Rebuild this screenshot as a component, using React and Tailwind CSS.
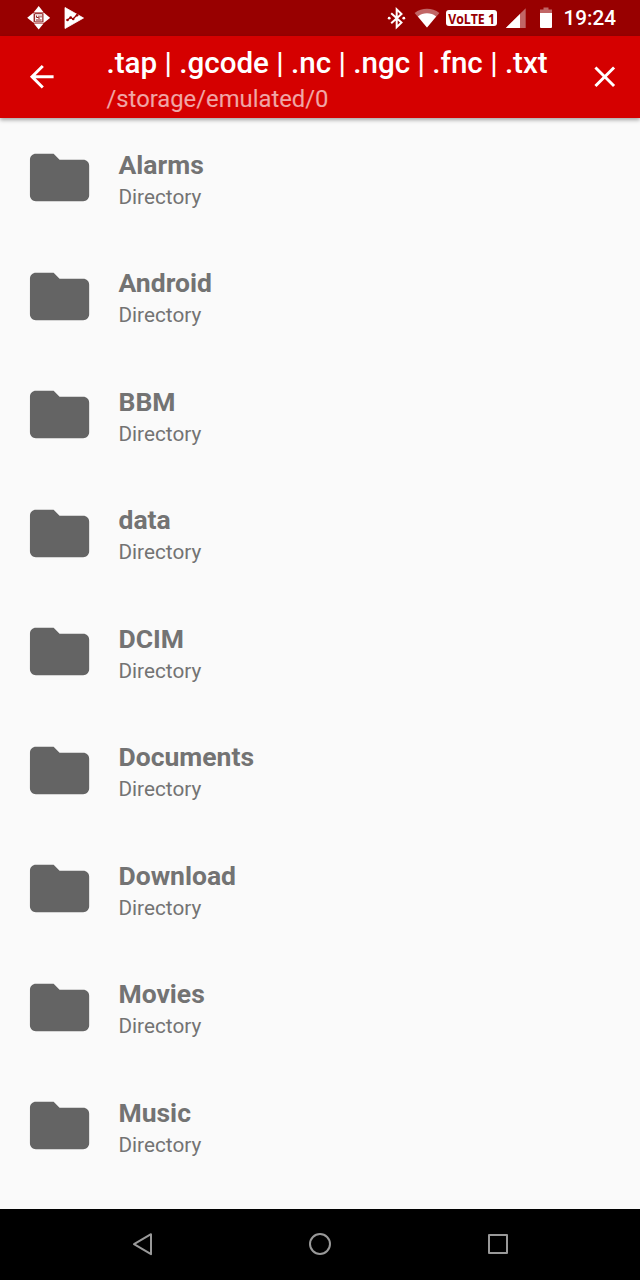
const folders = [
  'Alarms',
  'Android',
  'BBM',
  'data',
  'DCIM',
  'Documents',
  'Download',
  'Movies',
  'Music',
];

const StatusBar = () => (
  <div className="flex h-9 items-center bg-[#980000] pl-[26px] text-white">
    <svg className="h-6 w-6" viewBox="0 0 24 24" fill="currentColor">
      <path d="M7.8 6.2L12.7 0l4.9 6.2zM7.8 17.4l4.9 6 4.9-6zM7.4 6.8L1.2 11.8l6.2 5zM18 6.8l6.2 5-6.2 5z" />
      <path d="M7.6 6.7h10.2v10.2H7.6z" />
      <path d="M8.6 7.7h8.2v8.2H8.6z" fill="none" stroke="#8a1414" strokeWidth="1" />
      <path d="M10.6 9.5v2h2M13 9.5v3.5M15 9.5v2M10 14h5.6" fill="none" stroke="#8a1414" strokeWidth="1" />
    </svg>
    <svg className="ml-3 h-6 w-6" viewBox="0 0 24 24">
      <path d="M3 1.5L21.5 12 3 22.5z" fill="#fff" stroke="#fff" strokeWidth=".8" strokeLinejoin="round" />
      <path d="M5.5 14l3-2.5 2.5 1.5 4-4" fill="none" stroke="#980000" strokeWidth="1.3" />
      <g fill="#980000">
        <circle cx="5.5" cy="14" r="1.3" />
        <circle cx="8.7" cy="11.6" r="1.3" />
        <circle cx="11.2" cy="13" r="1.3" />
        <circle cx="15" cy="9.3" r="1.3" />
      </g>
    </svg>

    <svg className="ml-[299px] h-6 w-6" viewBox="0 0 24 24">
      <path d="M6.2 7.2l10.3 9.3-4.8 4.7V3.300l4.800 4.700L6.200 17.300" fill="none" stroke="#fff" strokeWidth="2" />
      <circle cx="4.2" cy="12.2" r="1.4" fill="#fff" />
      <circle cx="18.8" cy="12.2" r="1.4" fill="#fff" />
    </svg>
    <svg className="ml-[5px] h-6 w-[26px]" viewBox="0 0 26 24">
      <path d="M.6 7C8 1.4 18 1.4 25.4 7L13 21.5z" fill="#fff" fillOpacity=".4" />
      <path d="M3.9 10.6c5-4.4 13.2-4.4 18.2 0L13 21.5z" fill="#fff" />
    </svg>
    <div className="ml-[6px] flex h-4 w-[51px] items-center justify-center rounded-[3px] bg-white font-['Open_Sans',sans-serif] text-[15px] font-bold leading-none whitespace-nowrap text-[#980000]">
      <span className="scale-x-[0.82]">VoLTE 1</span>
    </div>
    <svg className="ml-2 h-6 w-6" viewBox="0 0 24 24">
      <path d="M20.7 2.2V22H.8z" fill="#fff" fillOpacity=".4" />
      <path d="M15 7.9V22H.8z" fill="#fff" />
    </svg>
    <svg className="ml-[9px] h-6 w-4" viewBox="0 0 16 24">
      <path d="M5.5 1.5h5v2H14V7H2V3.5h3.500z" fill="#fff" fillOpacity=".4" />
      <path d="M2 7h12v14a1 1 0 0 1-1 1H3a1 1 0 0 1-1-1z" fill="#fff" />
    </svg>
    <span className="ml-[9.5px] text-[20.7px] font-medium leading-none">19:24</span>
  </div>
);

const Toolbar = () => (
  <header className="z-10 flex h-[82px] items-center bg-[#d50000] pl-[23.7px] pr-[18px] text-white shadow-[0_2px_4px_rgba(0,0,0,0.35)]">
    <svg className="h-[35.5px] w-[35.5px]" viewBox="0 0 24 24" fill="currentColor">
      <path d="M20 11H7.83l5.59-5.59L12 4l-8 8 8 8 1.41-1.41L7.83 13H20v-2z" />
    </svg>
    <div className="ml-[47.3px] flex-1 whitespace-nowrap">
      <h1 className="mt-[5px] text-[29.6px] font-medium leading-9">.tap | .gcode | .nc | .ngc | .fnc | .txt</h1>
      <p className="mt-0.5 text-[23.8px] leading-8 text-white/65">/storage/emulated/0</p>
    </div>
    <svg className="h-[35.5px] w-[35.5px]" viewBox="0 0 24 24" fill="currentColor">
      <path d="M19 6.41L17.59 5 12 10.59 6.41 5 5 6.41 10.59 12 5 17.59 6.41 19 12 13.41 17.59 19 19 17.59 13.41 12z" />
    </svg>
  </header>
);

const FolderRow = ({ name }) => (
  <li className="flex h-[118.52px] shrink-0 items-center pl-[23.7px]">
    <svg className="h-[71.1px] w-[71.1px]" viewBox="0 0 24 24" fill="#646464">
      <path d="M10 4H4c-1.1 0-1.99.9-1.99 2L2 18c0 1.1.9 2 2 2h16c1.1 0 2-.9 2-2V8c0-1.1-.9-2-2-2h-8l-2-2z" />
    </svg>
    <div className="mb-[-3px] ml-[23.7px] text-[#737373]">
      <p className="text-[26.5px] font-bold leading-[34px]">{name}</p>
      <p className="mt-px text-[20.74px] leading-7">Directory</p>
    </div>
  </li>
);

const NavBar = () => (
  <nav className="flex h-[71px] items-center justify-between bg-black px-[124px] pb-px">
    <svg className="h-9 w-9" viewBox="0 0 36 36" fill="none" stroke="#999" strokeWidth="2" strokeLinejoin="round">
      <path d="M27 8.2v20L10 18.2z" />
    </svg>
    <svg className="h-9 w-9" viewBox="0 0 36 36" fill="none" stroke="#999" strokeWidth="2">
      <circle cx="18" cy="18" r="10" />
    </svg>
    <svg className="h-9 w-9" viewBox="0 0 36 36" fill="none" stroke="#999" strokeWidth="2" strokeLinejoin="round">
      <path d="M9 9h18v18H9z" />
    </svg>
  </nav>
);

const App = () => {
  return (
    <div className="flex h-[1280px] w-[640px] flex-col overflow-hidden bg-[#fafafa] font-[Roboto,sans-serif]">
      <StatusBar />
      <Toolbar />
      <ul className="flex-1 overflow-hidden pt-[0.5px]">
        {folders.map((name) => (
          <FolderRow key={name} name={name} />
        ))}
      </ul>
      <NavBar />
    </div>
  );
};

export default App;
